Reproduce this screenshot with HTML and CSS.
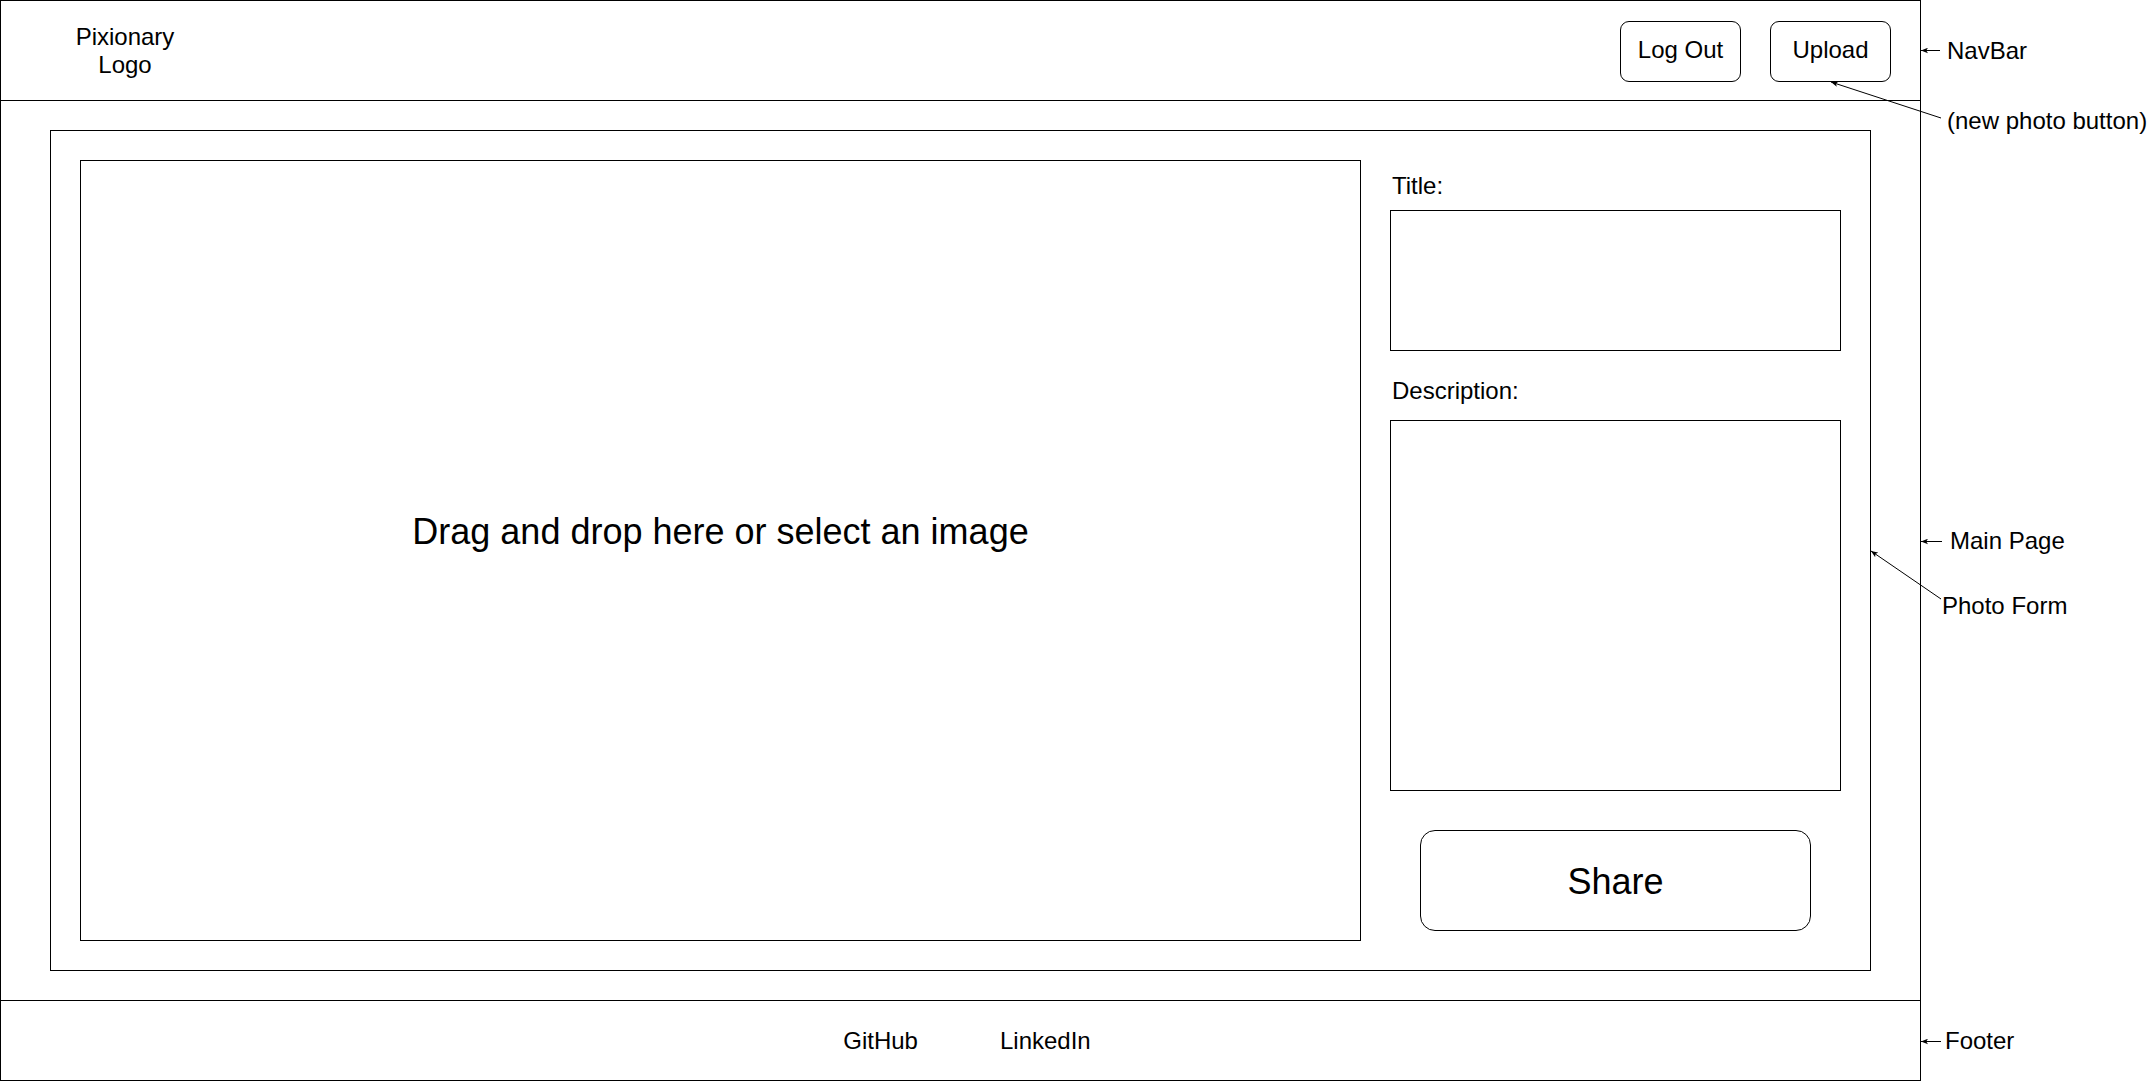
FILE: index.html
```html
<!DOCTYPE html>
<html lang="en">
<head>
<meta charset="utf-8">
<title>Pixionary – Upload wireframe</title>
<link rel="stylesheet" href="styles.css">
</head>
<body>
<div class="page">
  <div class="frame">
    <header class="navbar">
      <div class="logo">Pixionary<br>Logo</div>
      <div class="nav-actions">
        <button class="nav-btn" type="button">Log Out</button>
        <button class="nav-btn" type="button">Upload</button>
      </div>
    </header>
    <main class="main">
      <form class="photo-form">
        <div class="dropzone"><span class="dropzone-text">Drag and drop here or select an image</span></div>
        <div class="fields">
          <label class="field-label label-title">Title:</label>
          <div class="field-box title-box"></div>
          <label class="field-label label-desc">Description:</label>
          <div class="field-box desc-box"></div>
          <button class="share-btn" type="button">Share</button>
        </div>
      </form>
    </main>
    <footer class="footer">
      <span class="footer-link">GitHub</span>
      <span class="footer-link">LinkedIn</span>
    </footer>
  </div>
  <aside class="notes">
    <span class="note note-navbar">NavBar</span>
    <span class="note note-newphoto">(new photo button)</span>
    <span class="note note-main">Main Page</span>
    <span class="note note-form">Photo Form</span>
    <span class="note note-footer">Footer</span>
  </aside>
  <svg class="arrows" width="2151" height="1081" viewBox="0 0 2151 1081" xmlns="http://www.w3.org/2000/svg">
    <defs>
      <marker id="tip" viewBox="0 0 10 8" refX="10" refY="4" markerWidth="7" markerHeight="6" markerUnits="userSpaceOnUse" orient="auto">
        <path d="M0,0 L10,4 L0,8 L2.5,4 Z" fill="#000"/>
      </marker>
    </defs>
    <g stroke="#000" stroke-width="1" fill="none">
      <line x1="1940" y1="50.5" x2="1921" y2="50.5" marker-end="url(#tip)"/>
      <line x1="1941" y1="118" x2="1831" y2="82" marker-end="url(#tip)"/>
      <line x1="1942" y1="541.5" x2="1921" y2="541.5" marker-end="url(#tip)"/>
      <line x1="1941" y1="599" x2="1871" y2="551" marker-end="url(#tip)"/>
      <line x1="1941" y1="1041.5" x2="1921" y2="1041.5" marker-end="url(#tip)"/>
    </g>
  </svg>
</div>
</body>
</html>
```

FILE: styles.css
```css
* {
  box-sizing: border-box;
}

html, body {
  margin: 0;
  padding: 0;
  background: #ffffff;
}

body {
  font-family: "Liberation Sans", Arial, sans-serif;
  color: #000000;
  font-size: 24px;
  line-height: 28px;
}

.page {
  position: relative;
  display: flex;
  width: 2151px;
  height: 1081px;
  overflow: hidden;
}

.frame {
  width: 1921px;
  height: 1081px;
  border: 1px solid #000;
  display: flex;
  flex-direction: column;
  flex-shrink: 0;
}

/* NavBar */
.navbar {
  height: 100px;
  border-bottom: 1px solid #000;
  display: flex;
  align-items: flex-start;
  flex-shrink: 0;
}

.logo {
  width: 248px;
  align-self: center;
  text-align: center;
  font-size: 24px;
  line-height: 27.6px;
}

.nav-actions {
  margin-left: auto;
  display: flex;
  gap: 29px;
  padding-top: 20px;
  padding-right: 29px;
}

.nav-btn {
  width: 121px;
  height: 61px;
  border: 1px solid #000;
  border-radius: 9px;
  background: #fff;
  color: #000;
  font-family: "Liberation Sans", Arial, sans-serif;
  font-size: 24px;
  line-height: 28px;
  padding: 0 0 3px 0;
  margin: 0;
}

/* Main page */
.main {
  flex: 1;
  display: flex;
  padding: 29px 49px;
  min-height: 0;
}

.photo-form {
  flex: 1;
  display: flex;
  margin: 0;
  border: 1px solid #000;
  padding: 29px;
}

.dropzone {
  width: 1281px;
  border: 1px solid #000;
  display: flex;
  align-items: center;
  justify-content: center;
  padding-bottom: 38px;
  flex-shrink: 0;
}

.dropzone-text {
  font-size: 36px;
  line-height: 41px;
}

.fields {
  width: 480px;
  padding-left: 29px;
  display: flex;
  flex-direction: column;
  align-items: flex-start;
}

.field-label {
  display: block;
  padding-left: 2px;
  font-size: 24px;
  line-height: 28px;
}

.label-title {
  margin-top: 12px;
}

.label-desc {
  margin-top: 26px;
}

.field-box {
  width: 451px;
  border: 1px solid #000;
  background: #fff;
}

.title-box {
  margin-top: 10px;
  height: 141px;
}

.desc-box {
  margin-top: 15px;
  height: 371px;
}

.share-btn {
  margin: 39px 0 0 30px;
  width: 391px;
  height: 101px;
  border: 1px solid #000;
  border-radius: 15px;
  background: #fff;
  color: #000;
  font-family: "Liberation Sans", Arial, sans-serif;
  font-size: 36px;
  line-height: 41px;
  padding: 1px 0 0 0;
}

/* Footer */
.footer {
  height: 80px;
  border-top: 1px solid #000;
  display: flex;
  align-items: center;
  justify-content: center;
  gap: 82px;
  padding-left: 13px;
  flex-shrink: 0;
}

.footer-link {
  font-size: 24px;
  line-height: 28px;
}

/* Annotations (diagram labels on the free canvas) */
.notes {
  position: relative;
  flex: 1;
  height: 1081px;
}

.note {
  position: absolute;
  white-space: nowrap;
  font-size: 24px;
  line-height: 28px;
}

.note-navbar { left: 26px; top: 37px; }
.note-newphoto { left: 26px; top: 107px; }
.note-main { left: 29px; top: 527px; }
.note-form { left: 21px; top: 592px; }
.note-footer { left: 24px; top: 1027px; }

.arrows {
  position: absolute;
  left: 0;
  top: 0;
  pointer-events: none;
}
```
